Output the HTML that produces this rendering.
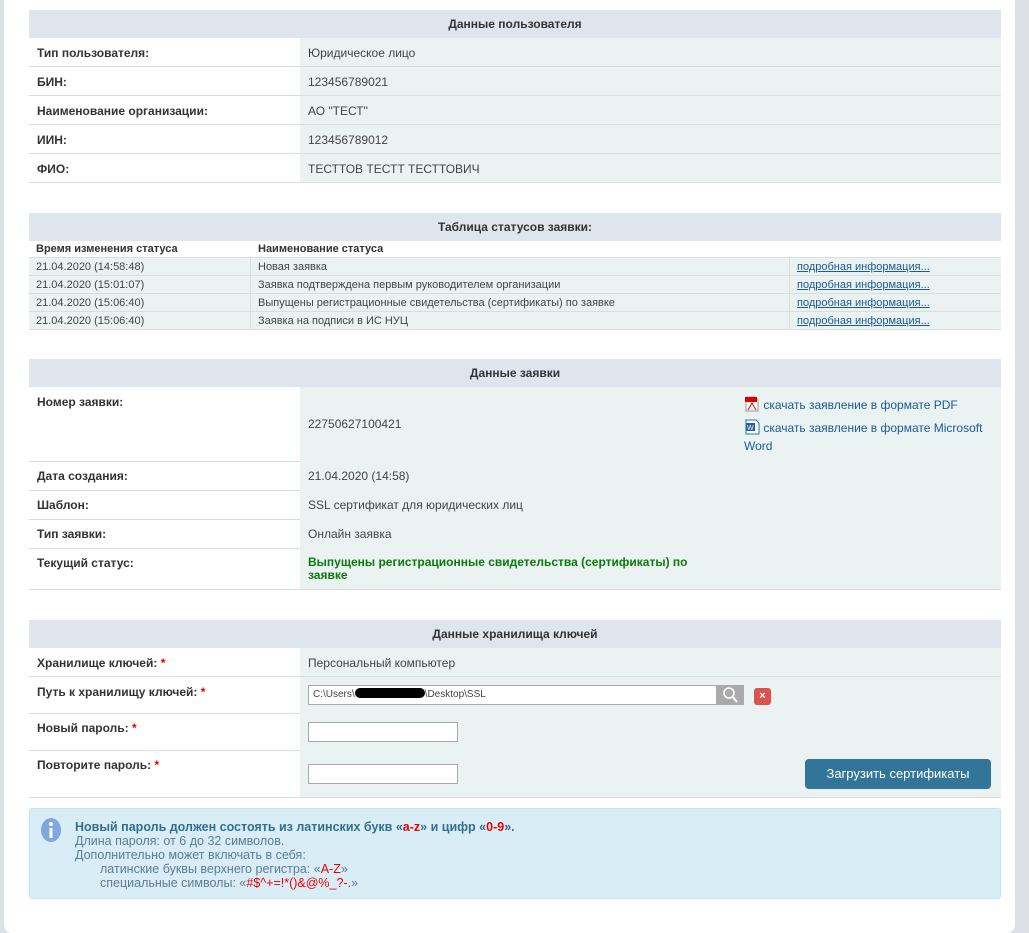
<!DOCTYPE html>
<html><head><meta charset="utf-8"><style>
*{box-sizing:border-box;margin:0;padding:0}
html,body{width:1029px;height:933px;overflow:hidden}
body{background:#dde1e6;font-family:"Liberation Sans",sans-serif;color:#444;position:relative;font-size:12px}
.panel{position:absolute;left:4px;top:-10px;width:1011px;height:943px;background:#fff;border-radius:8px}
.a{position:absolute}
.hd{position:absolute;left:29px;width:972px;height:28px;background:#dfe5ec;font-weight:bold;text-align:center;line-height:28px;font-size:12px;color:#333}
.row{position:absolute;left:29px;width:972px;border-bottom:1px solid #dcdcdc}
.row .l{position:absolute;left:0;top:0;bottom:0;width:271px;padding:8px 8px;font-weight:bold;font-size:12px;color:#333}
.row .v{position:absolute;left:271px;right:0;top:0;bottom:0;background:#eaf3f1;padding:8px 8px;font-size:12px}
.sr{position:absolute;left:29px;width:972px;height:18px;background:#eaf3f1;border-bottom:1px solid #dcdcdc;font-size:11px;line-height:18px}
.sr span{position:absolute;top:0;bottom:0;padding-left:7px}
.sr .c2{left:221px;border-left:1px solid #dcdcdc}
.sr .c3{left:760px;border-left:1px solid #dcdcdc;color:#1a5a96;text-decoration:underline}
.req{color:#d00}
input{position:absolute;border:1px solid #aaa;background:#fff;height:20px}
</style></head><body>
<div class="panel"></div>

<div class="hd" style="top:10px">Данные пользователя</div>
<div class="row" style="top:38px;height:29px"><div class="l">Тип пользователя:</div><div class="v">Юридическое лицо</div></div>
<div class="row" style="top:67px;height:29px"><div class="l">БИН:</div><div class="v">123456789021</div></div>
<div class="row" style="top:96px;height:29px"><div class="l">Наименование организации:</div><div class="v">АО "ТЕСТ"</div></div>
<div class="row" style="top:125px;height:29px"><div class="l">ИИН:</div><div class="v">123456789012</div></div>
<div class="row" style="top:154px;height:29px"><div class="l">ФИО:</div><div class="v">ТЕСТТОВ ТЕСТТ ТЕСТТОВИЧ</div></div>

<div class="hd" style="top:213px">Таблица статусов заявки:</div>
<div class="a" style="top:241px;left:29px;width:972px;height:17px;border-bottom:1px solid #dcdcdc;font-weight:bold;font-size:11px;line-height:16px;color:#333"><span class="a" style="left:7px">Время изменения статуса</span><span class="a" style="left:229px">Наименование статуса</span></div>
<div class="sr" style="top:258px"><span>21.04.2020 (14:58:48)</span><span class="c2">Новая заявка</span><span class="c3">подробная информация...</span></div>
<div class="sr" style="top:276px"><span>21.04.2020 (15:01:07)</span><span class="c2">Заявка подтверждена первым руководителем организации</span><span class="c3">подробная информация...</span></div>
<div class="sr" style="top:294px"><span>21.04.2020 (15:06:40)</span><span class="c2">Выпущены регистрационные свидетельства (сертификаты) по заявке</span><span class="c3">подробная информация...</span></div>
<div class="sr" style="top:312px"><span>21.04.2020 (15:06:40)</span><span class="c2">Заявка на подписи в ИС НУЦ</span><span class="c3">подробная информация...</span></div>

<div class="hd" style="top:359px">Данные заявки</div>
<div class="row" style="top:387px;height:75px"><div class="l">Номер заявки:</div><div class="v"><div style="position:absolute;top:30px;left:8px">22750627100421</div>
<div style="position:absolute;left:444px;top:9px;width:250px;color:#1a5a96;line-height:18px">
<svg width="16" height="16" style="vertical-align:-3px"><path d="M2 1h9l3 3v11H2z" fill="#fff" stroke="#999"/><rect x="1" y="1" width="12" height="5" fill="#d00"/><path d="M4 14l4-7 4 7" fill="none" stroke="#d00"/></svg> скачать заявление в формате PDF<br>
<div style="margin-top:5px"><svg width="16" height="16" style="vertical-align:-3px"><path d="M2 1h10l3 3v11H2z" fill="#fff" stroke="#27a"/><rect x="2" y="4" width="9" height="8" fill="#2a5aa8"/><text x="3" y="11" font-size="7" fill="#fff" font-family="Liberation Sans">W</text></svg> скачать заявление в формате Microsoft Word</div></div></div></div>
<div class="row" style="top:461px;height:30px"><div class="l">Дата создания:</div><div class="v">21.04.2020 (14:58)</div></div>
<div class="row" style="top:490px;height:30px"><div class="l">Шаблон:</div><div class="v">SSL сертификат для юридических лиц</div></div>
<div class="row" style="top:519px;height:30px"><div class="l">Тип заявки:</div><div class="v">Онлайн заявка</div></div>
<div class="row" style="top:548px;height:42px"><div class="l">Текущий статус:</div><div class="v" style="color:#0a7a0a;font-weight:bold;line-height:13px">Выпущены регистрационные свидетельства (сертификаты) по<br>заявке</div></div>

<div class="hd" style="top:620px">Данные хранилища ключей</div>
<div class="row" style="top:648px;height:29px"><div class="l">Хранилище ключей: <span class="req">*</span></div><div class="v">Персональный компьютер</div></div>
<div class="row" style="top:677px;height:37px"><div class="l">Путь к хранилищу ключей: <span class="req">*</span></div><div class="v">
<div class="a" style="left:8px;top:8px;width:409px;height:20px;border:1px solid #aaa;background:#fff;font-size:10px;line-height:18px;padding-left:4px">C:\Users\<span style="display:inline-block;width:70px;height:10px;background:#000;border-radius:5px;vertical-align:-1px"></span>\Desktop\SSL</div>
<div class="a" style="left:417px;top:8px;width:27px;height:20px;background:#aaa"><svg width="27" height="20"><circle cx="12" cy="8" r="5" fill="none" stroke="#fff" stroke-width="1.6"/><path d="M15 11l5 6" stroke="#fff" stroke-width="2"/></svg></div>
<div class="a" style="left:454px;top:11px;width:17px;height:17px;background:#d9534f;border-radius:3px;color:#fff;font-size:11px;font-weight:bold;text-align:center;line-height:17px">×</div>
</div></div>
<div class="row" style="top:713px;height:38px"><div class="l">Новый пароль: <span class="req">*</span></div><div class="v"><input style="left:8px;top:9px;width:150px"></div></div>
<div class="row" style="top:750px;height:48px"><div class="l">Повторите пароль: <span class="req">*</span></div><div class="v"><input style="left:8px;top:14px;width:150px">
<div class="a" style="left:505px;top:9px;width:186px;height:30px;background:#337599;border-radius:4px;color:#fff;font-size:13px;text-align:center;line-height:30px">Загрузить сертификаты</div></div></div>

<div class="a" style="left:29px;top:808px;width:972px;height:91px;background:#d9edf7;border:1px solid #bce8f1;border-radius:3px;font-size:12.5px;color:#5a7d96;line-height:14px">
<svg class="a" style="left:10px;top:8px" width="22" height="26"><ellipse cx="11" cy="13" rx="10" ry="12" fill="#7fa8e0"/><circle cx="11" cy="7" r="2" fill="#fff"/><rect x="9.5" y="11" width="3" height="10" fill="#fff"/></svg>
<div class="a" style="left:45px;top:11px"><b style="color:#31708f">Новый пароль должен состоять из латинских букв «<span style="color:#e00">a-z</span>» и цифр «<span style="color:#e00">0-9</span>».</b><br>Длина пароля: от 6 до 32 символов.<br>Дополнительно может включать в себя:<br><span style="padding-left:25px">латинские буквы верхнего регистра: «<span style="color:#e00">A-Z</span>»</span><br><span style="padding-left:25px">специальные символы: «<span style="color:#e00">#$^+=!*()&amp;@%_?-.</span>»</span></div>
</div>
</body></html>
